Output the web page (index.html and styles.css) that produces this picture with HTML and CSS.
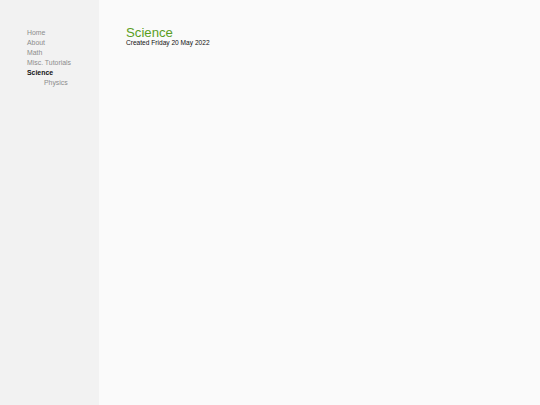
FILE: index.html
```html
<!DOCTYPE html>
<html>
<head>
<meta charset="utf-8">
<link rel="stylesheet" href="styles.css">
</head>
<body>
<div class="layout">
  <nav class="sidebar">
    <ul class="nav">
      <li><a href="#">Home</a></li>
      <li><a href="#">About</a></li>
      <li><a href="#">Math</a></li>
      <li><a href="#">Misc. Tutorials</a></li>
      <li class="current">Science
        <ul class="sub">
          <li><a href="#">Physics</a></li>
        </ul>
      </li>
    </ul>
  </nav>
  <main class="content">
    <h1 class="title">Science</h1>
    <div class="created">Created Friday 20 May 2022</div>
  </main>
</div>
</body>
</html>
```
FILE: styles.css
```css
html, body {
  margin: 0;
  padding: 0;
  height: 100%;
}
body {
  font-family: "Liberation Sans", Arial, sans-serif;
  background: #fafafa;
}
.layout {
  display: flex;
  min-height: 100%;
}
.sidebar {
  width: 99px;
  flex: none;
  background: #f2f2f2;
  padding-top: 28px;
  box-sizing: border-box;
}
.nav, .sub {
  list-style: none;
  margin: 0;
  padding: 0;
}
.nav {
  padding-left: 27px;
}
.nav li {
  font-size: 6.9px;
  line-height: 10px;
}
.nav a {
  color: #8c8c8c;
  text-decoration: none;
}
.nav .current {
  font-weight: bold;
  color: #111;
}
.sub {
  padding-left: 17px;
  font-weight: normal;
}
.content {
  flex: 1;
  padding: 26px 27px;
}
.title {
  margin: 0 0 -1px;
  font-size: 13.2px;
  font-weight: normal;
  line-height: 14px;
  color: #5a9e1e;
}
.created {
  font-size: 6.6px;
  line-height: 8px;
  color: #111;
}
```
